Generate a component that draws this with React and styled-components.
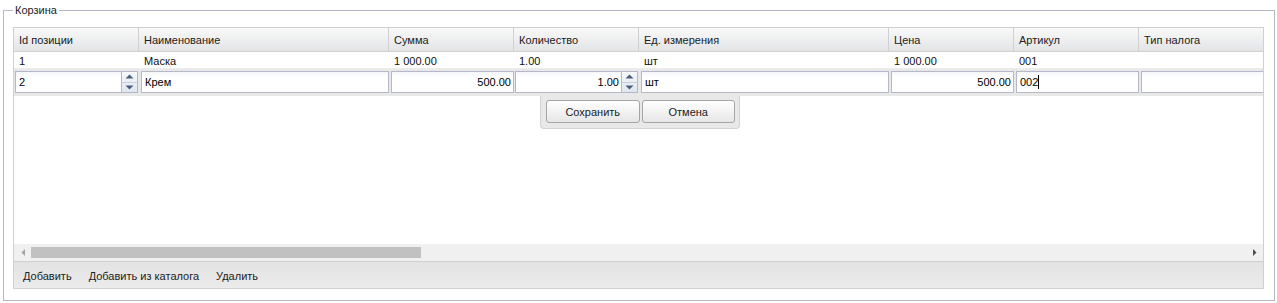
import React from "react";
import styled, { createGlobalStyle } from "styled-components";

const GlobalStyle = createGlobalStyle`
  html, body { margin: 0; padding: 0; background: #fff; }
  body { font-family: "Liberation Sans", Arial, sans-serif; font-size: 11px; color: #1a1a1a; }
  * { box-sizing: border-box; }
`;

const Page = styled.div`
  padding: 3px 2px 0 3px;
`;

const Fieldset = styled.fieldset`
  margin: 0;
  border: 1px solid #b5b8c8;
  padding: 0 10px 11px 9px;
  min-width: 0;
`;

const Legend = styled.legend`
  padding: 0 2px;
  font-size: 11px;
  line-height: 14px;
  color: #222;
`;

const Grid = styled.div`
  margin-top: 10px;
  border: 1px solid #d0d0d0;
  display: flex;
  flex-direction: column;
  overflow: hidden;
`;

const HeaderRow = styled.div`
  display: flex;
  height: 24px;
  border-bottom: 1px solid #d0d0d0;
  background: linear-gradient(#f9f9f9, #e3e4e6);
  width: max-content;
`;

const HeaderCell = styled.div`
  flex: 0 0 ${(p) => p.$w}px;
  border-right: ${(p) => (p.$filler ? "none" : "1px solid #d0d0d0")};
  padding: 1px 6px 0 5px;
  line-height: 22px;
  color: #222;
  white-space: nowrap;
  overflow: hidden;
`;

const Body = styled.div`
  position: relative;
  height: 192px;
  overflow: hidden;
  background: #fff;
`;

const Row = styled.div`
  display: flex;
  height: 17px;
  border-bottom: 1px solid #ededed;
  width: max-content;
`;

const Cell = styled.div`
  flex: 0 0 ${(p) => p.$w}px;
  padding: 2px 6px 0 5px;
  line-height: 14px;
  color: #111;
  white-space: nowrap;
  overflow: hidden;
`;

const EditorRow = styled.div`
  display: flex;
  height: 27px;
  padding: 2px 0 3px;
  background: #e8e8e8;
  width: max-content;
`;

const EditorCell = styled.div`
  flex: 0 0 ${(p) => p.$w}px;
  display: flex;
  padding-left: ${(p) => (p.$spin ? 1 : 2)}px;
  padding-right: ${(p) => (p.$spin ? 1 : 0)}px;
`;

const Field = styled.div`
  flex: 1;
  height: 22px;
  border: 1px solid #b5b8c8;
  background: linear-gradient(#f4f6fa, #fff 5px);
  padding: 1px ${(p) => (p.$right ? 2 : 3)}px 0;
  line-height: 19px;
  text-align: ${(p) => (p.$right ? "right" : "left")};
  color: #000;
  white-space: nowrap;
  overflow: hidden;
`;

const Caret = styled.span`
  display: inline-block;
  width: 1px;
  height: 14px;
  background: #000;
  vertical-align: -3px;
`;

const Spinner = styled.div`
  flex: 0 0 16px;
  height: 22px;
  border: 1px solid #b5b8c8;
  border-left: none;
  background: linear-gradient(#f7f9fc, #dfe6ef);
  display: flex;
  flex-direction: column;
`;

const SpinHalf = styled.div`
  flex: 1;
  display: flex;
  align-items: center;
  justify-content: center;
  border-top: ${(p) => (p.$bottom ? "1px solid #c9d0dc" : "none")};
`;

const ActionPanel = styled.div`
  position: absolute;
  top: 44px;
  left: 526px;
  width: 200px;
  height: 33px;
  background: #e8e8e8;
  border: 1px solid #d3d3d3;
  border-top: none;
  border-radius: 0 0 4px 4px;
  padding: 4px 4px 0 5px;
  display: flex;
  gap: 2px;
`;

const Button = styled.div`
  width: 94px;
  height: 23px;
  border: 1px solid #a5a5a5;
  border-radius: 3px;
  background: linear-gradient(#ffffff, #e6e6e6);
  text-align: center;
  padding-top: 1px;
  line-height: 20px;
  color: #222;
`;

const ScrollBar = styled.div`
  height: 17px;
  background: #f0f0f0;
  display: flex;
  align-items: center;
`;

const ScrollArrow = styled.div`
  flex: 0 0 17px;
  height: 17px;
  display: flex;
  align-items: center;
  justify-content: center;
`;

const Track = styled.div`
  flex: 1;
  height: 17px;
  display: flex;
  align-items: center;
`;

const Thumb = styled.div`
  height: 11px;
  background: #c1c1c1;
`;

const Toolbar = styled.div`
  height: 27px;
  border-top: 1px solid #d0d0d0;
  background: linear-gradient(#e3e3e3, #ebebeb);
  display: flex;
  align-items: center;
  padding: 1px 0 0 9px;
  gap: 17px;
`;

const ToolButton = styled.div`
  color: #222;
  line-height: 16px;
  white-space: nowrap;
`;

const columns = [
  { title: "Id позиции", w: 125 },
  { title: "Наименование", w: 250 },
  { title: "Сумма", w: 125 },
  { title: "Количество", w: 125 },
  { title: "Ед. измерения", w: 250 },
  { title: "Цена", w: 125 },
  { title: "Артикул", w: 125 },
  { title: "Тип налога", w: 125 },
];

const FILLER = 2600;

const row1 = ["1", "Маска", "1 000.00", "1.00", "шт", "1 000.00", "001", ""];

const editor = [
  { v: "2", spin: true },
  { v: "Крем" },
  { v: "500.00", right: true },
  { v: "1.00", right: true, spin: true },
  { v: "шт" },
  { v: "500.00", right: true },
  { v: "002", caret: true },
  { v: "" },
];

const SpinButtons = () => (
  <Spinner>
    <SpinHalf>
      <svg width="9" height="5" viewBox="0 0 9 5">
        <path d="M0.5 4.5 L4.5 0.5 L8.5 4.5 Z" fill="#4b5d7c" />
      </svg>
    </SpinHalf>
    <SpinHalf $bottom>
      <svg width="9" height="5" viewBox="0 0 9 5">
        <path d="M0.5 0.5 L4.5 4.5 L8.5 0.5 Z" fill="#4b5d7c" />
      </svg>
    </SpinHalf>
  </Spinner>
);

export default function App() {
  return (
    <>
      <GlobalStyle />
      <Page>
        <Fieldset>
          <Legend>Корзина</Legend>
          <Grid>
            <HeaderRow>
              {columns.map((c) => (
                <HeaderCell key={c.title} $w={c.w}>
                  {c.title}
                </HeaderCell>
              ))}
              <HeaderCell $w={FILLER} $filler />
            </HeaderRow>
            <Body>
              <Row>
                {columns.map((c, i) => (
                  <Cell key={c.title} $w={c.w}>
                    {row1[i]}
                  </Cell>
                ))}
                <Cell $w={FILLER} />
              </Row>
              <EditorRow>
                {columns.map((c, i) => {
                  const e = editor[i];
                  return (
                    <EditorCell key={c.title} $w={c.w} $spin={e.spin}>
                      <Field $right={e.right}>
                        {e.v}
                        {e.caret && <Caret />}
                      </Field>
                      {e.spin && <SpinButtons />}
                    </EditorCell>
                  );
                })}
              </EditorRow>
              <ActionPanel>
                <Button>Сохранить</Button>
                <Button>Отмена</Button>
              </ActionPanel>
            </Body>
            <ScrollBar>
              <ScrollArrow>
                <svg width="4" height="7" viewBox="0 0 4 7">
                  <path d="M4 0 L0.5 3.5 L4 7 Z" fill="#a3a3a3" />
                </svg>
              </ScrollArrow>
              <Track>
                <Thumb style={{ width: "390px" }} />
              </Track>
              <ScrollArrow>
                <svg width="4" height="7" viewBox="0 0 4 7">
                  <path d="M0 0 L3.5 3.5 L0 7 Z" fill="#505050" />
                </svg>
              </ScrollArrow>
            </ScrollBar>
            <Toolbar>
              <ToolButton>Добавить</ToolButton>
              <ToolButton>Добавить из каталога</ToolButton>
              <ToolButton>Удалить</ToolButton>
            </Toolbar>
          </Grid>
        </Fieldset>
      </Page>
    </>
  );
}
